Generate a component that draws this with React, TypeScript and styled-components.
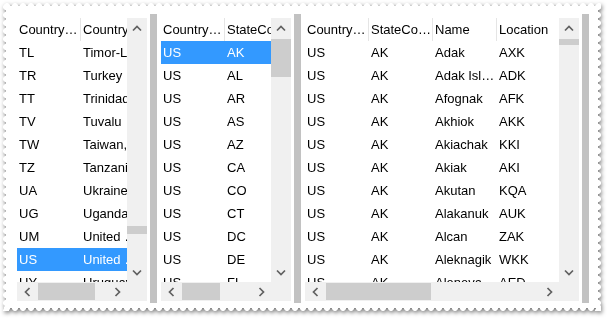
import styled, { createGlobalStyle } from 'styled-components';

const GlobalStyle = createGlobalStyle`
  html, body {
    margin: 0;
    padding: 0;
    background: #fff;
  }
  body {
    width: 607px;
    height: 318px;
    overflow: hidden;
    font-family: "Liberation Sans", Arial, sans-serif;
    font-size: 13px;
    color: #000;
  }
`;

type GridData = {
  width: number;
  columns: string[];
  rows: string[][];
  selected?: number;
  vThumb: { top: number; size: number };
  hThumb: { left: number; size: number };
};

const countries: GridData = {
  width: 130,
  columns: ['CountryCode', 'CountryName'],
  rows: [
    ['TL', 'Timor-Leste'],
    ['TR', 'Turkey'],
    ['TT', 'Trinidad and Tobago'],
    ['TV', 'Tuvalu'],
    ['TW', 'Taiwan, Province of China'],
    ['TZ', 'Tanzania, United Republic of'],
    ['UA', 'Ukraine'],
    ['UG', 'Uganda'],
    ['UM', 'United States Minor Outlying Islands'],
    ['US', 'United States'],
    ['UY', 'Uruguay'],
  ],
  selected: 9,
  vThumb: { top: 188, size: 8 },
  hThumb: { left: 1, size: 57 },
};

const states: GridData = {
  width: 130,
  columns: ['CountryCode', 'StateCode'],
  rows: [
    ['US', 'AK'],
    ['US', 'AL'],
    ['US', 'AR'],
    ['US', 'AS'],
    ['US', 'AZ'],
    ['US', 'CA'],
    ['US', 'CO'],
    ['US', 'CT'],
    ['US', 'DC'],
    ['US', 'DE'],
    ['US', 'FL'],
  ],
  selected: 0,
  vThumb: { top: 1, size: 38 },
  hThumb: { left: 1, size: 38 },
};

const cities: GridData = {
  width: 274,
  columns: ['CountryCode', 'StateCode', 'Name', 'Location'],
  rows: [
    ['US', 'AK', 'Adak', 'AXK'],
    ['US', 'AK', 'Adak Island', 'ADK'],
    ['US', 'AK', 'Afognak', 'AFK'],
    ['US', 'AK', 'Akhiok', 'AKK'],
    ['US', 'AK', 'Akiachak', 'KKI'],
    ['US', 'AK', 'Akiak', 'AKI'],
    ['US', 'AK', 'Akutan', 'KQA'],
    ['US', 'AK', 'Alakanuk', 'AUK'],
    ['US', 'AK', 'Alcan', 'ZAK'],
    ['US', 'AK', 'Aleknagik', 'WKK'],
    ['US', 'AK', 'Aleneva', 'AED'],
  ],
  vThumb: { top: 1, size: 6 },
  hThumb: { left: 1, size: 105 },
};

const Chevron = ({ dir }: { dir: 'up' | 'down' | 'left' | 'right' }) => {
  const vertical = dir === 'up' || dir === 'down';
  const points = {
    up: '1,5.5 5,1.5 9,5.5',
    down: '1,1.5 5,5.5 9,1.5',
    left: '5.5,1 1.5,5 5.5,9',
    right: '1.5,1 5.5,5 1.5,9',
  }[dir];
  return (
    <svg
      width={vertical ? 10 : 7}
      height={vertical ? 7 : 10}
      viewBox={vertical ? '0 0 10 7' : '0 0 7 10'}
    >
      <polyline points={points} fill="none" stroke="#606060" strokeWidth="1.7" />
    </svg>
  );
};

const Grid = ({ data }: { data: GridData }) => (
  <Panel $width={data.width}>
    <Body>
      <Row>
        {data.columns.map(c => (
          <HeaderCell key={c}>{c}</HeaderCell>
        ))}
      </Row>
      {data.rows.map((r, i) => (
        <Row key={i} $selected={i === data.selected}>
          {r.map((c, j) => (
            <Cell key={j}>{c}</Cell>
          ))}
        </Row>
      ))}
    </Body>
    <VScroll>
      <ArrowButton>
        <Chevron dir="up" />
      </ArrowButton>
      <VTrack>
        <VThumb $top={data.vThumb.top} $size={data.vThumb.size} />
      </VTrack>
      <ArrowButton>
        <Chevron dir="down" />
      </ArrowButton>
    </VScroll>
    <HScroll>
      <ArrowButton $short>
        <Chevron dir="left" />
      </ArrowButton>
      <HTrack>
        <HThumb $left={data.hThumb.left} $size={data.hThumb.size} />
      </HTrack>
      <ArrowButton $short>
        <Chevron dir="right" />
      </ArrowButton>
    </HScroll>
    <Corner />
  </Panel>
);

const App = () => (
  <>
    <GlobalStyle />
    <Frame>
      <Splitter>
        {[countries, states, cities].map((d, i) => (
          <Column key={i}>
            <Grid data={d} />
            <Bar />
          </Column>
        ))}
      </Splitter>
    </Frame>
  </>
);

export default App;

const Frame = styled.div`
  margin: 3px 0 0 3px;
  width: 598px;
  height: 308px;
  box-sizing: border-box;
  padding: 11px 0 0 14px;
  filter: drop-shadow(1px 2px 2px rgba(0, 0, 0, 0.5));
  background:
    linear-gradient(#fff, #fff) 3px 3px / calc(100% - 6px) calc(100% - 6px) no-repeat,
    radial-gradient(circle closest-side, #fff 95%, transparent) 0 0 / 8px 6px repeat-x,
    radial-gradient(circle closest-side, #fff 95%, transparent) 0 100% / 8px 6px repeat-x,
    radial-gradient(circle closest-side, #fff 95%, transparent) 0 0 / 6px 8px repeat-y,
    radial-gradient(circle closest-side, #fff 95%, transparent) 100% 0 / 6px 8px repeat-y;
`;

const Splitter = styled.div`
  display: flex;
  height: 289px;
`;

const Column = styled.div`
  display: flex;
`;

const Bar = styled.div`
  width: 7px;
  margin: 0 4px 0 3px;
  background: #c2c2c2;
`;

const Panel = styled.div<{ $width: number }>`
  width: ${p => p.$width}px;
  margin: 4px 0 2px;
  display: grid;
  grid-template-columns: 1fr 20px;
  grid-template-rows: 1fr 19px;
  background: #f0f0f0;
`;

const Body = styled.div`
  overflow: hidden;
  background: #fff;
`;

const Row = styled.div<{ $selected?: boolean }>`
  display: flex;
  height: 23px;
  line-height: 23px;
  white-space: nowrap;
  width: max-content;
  min-width: 100%;
  background: ${p => (p.$selected ? '#3399ff' : 'transparent')};
  color: ${p => (p.$selected ? '#fff' : '#000')};
`;

const Cell = styled.div`
  flex: none;
  width: 64px;
  box-sizing: border-box;
  padding: 0 0 0 2px;
  overflow: hidden;
  text-overflow: ellipsis;
`;

const HeaderCell = styled(Cell)`
  border-right: 1px solid #e5e5e5;
`;

const VScroll = styled.div`
  display: flex;
  flex-direction: column;
  background: #f0f0f0;
`;

const HScroll = styled.div`
  display: flex;
  background: #f0f0f0;
`;

const Corner = styled.div`
  background: #f0f0f0;
`;

const ArrowButton = styled.div<{ $short?: boolean }>`
  flex: none;
  display: flex;
  align-items: center;
  justify-content: center;
  width: 20px;
  height: ${p => (p.$short ? '19px' : '20px')};
`;

const VTrack = styled.div`
  flex: 1;
`;

const HTrack = styled.div`
  flex: 1;
  display: flex;
`;

const VThumb = styled.div<{ $top: number; $size: number }>`
  margin-top: ${p => p.$top}px;
  height: ${p => p.$size}px;
  background: #cdcdcd;
`;

const HThumb = styled.div<{ $left: number; $size: number }>`
  margin-left: ${p => p.$left}px;
  width: ${p => p.$size}px;
  height: 17px;
  margin-top: 1px;
  background: #cdcdcd;
`;
